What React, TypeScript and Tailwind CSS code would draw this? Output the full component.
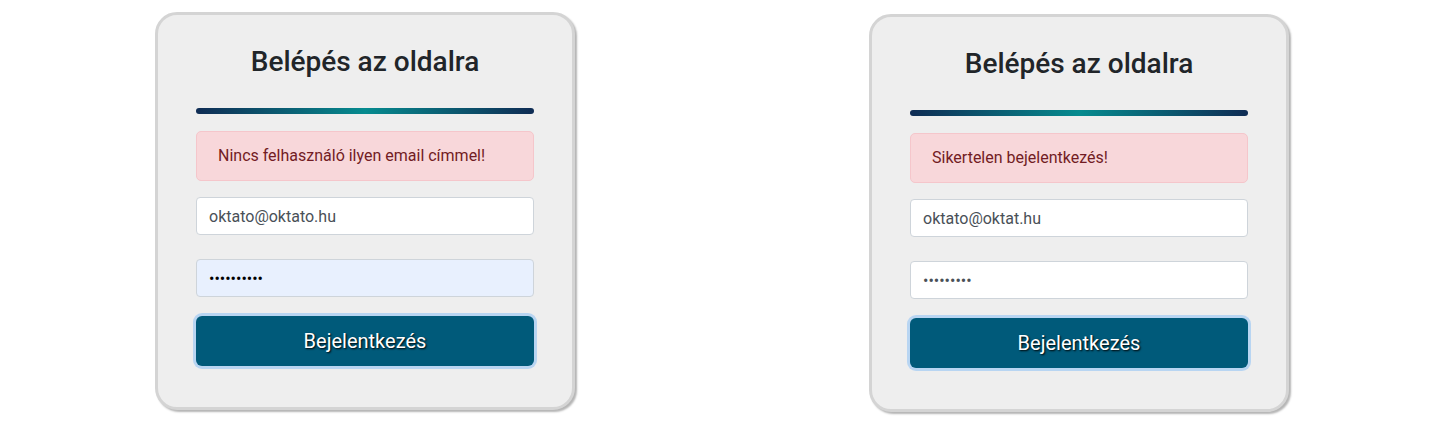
import React from "react";

type CardProps = {
  error: string;
  email: string;
  password: string;
  autofill?: boolean;
  className?: string;
};

function LoginCard({ error, email, password, autofill, className }: CardProps) {
  return (
    <div
      className={
        "w-[420px] rounded-[22px] border-[3px] border-[#d4d4d4] bg-[#eeeeee] px-[38px] pt-[30px] pb-[41px] shadow-[2px_2px_2px_#b5b5b5] " +
        (className ?? "")
      }
    >
      <h2 className="text-center text-[28px] leading-[34px] font-medium text-[#212529]">Belépés az oldalra</h2>
      <div className="mt-[29px] h-[6px] rounded-full bg-[linear-gradient(to_right,#0f2c54,#068b8f_50%,#0f2c54)]" />
      <div className="mt-[17px] flex h-[50px] items-center rounded-[5px] border border-[#f5c6cb] bg-[#f8d7da] px-[21px] text-[16px] text-[#721c24]">
        {error}
      </div>
      <input
        type="text"
        readOnly
        value={email}
        className="mt-[16px] block h-[38px] w-full rounded-[4px] border border-[#ced4da] bg-white px-[12px] text-[16px] text-[#495057] outline-none"
      />
      <input
        type="password"
        readOnly
        value={password}
        className={
          autofill
            ? "mt-[24px] block h-[38px] w-full rounded-[4px] border border-[#ced4da] bg-[#e8f0fe] px-[12px] text-[16px] text-black outline-none"
            : "mt-[24px] block h-[38px] w-full rounded-[4px] border border-[#ced4da] bg-white px-[12px] text-[16px] text-[#495057] outline-none"
        }
      />
      <button className="mt-[19px] block h-[50px] w-full rounded-[6px] bg-[#005a7a] text-[20px] text-white shadow-[0_0_0_3px_#b8d5f2] [text-shadow:1px_1px_2px_#000]">
        Bejelentkezés
      </button>
    </div>
  );
}

export default function App() {
  return (
    <div className="flex h-[445px] w-[1430px] items-start gap-[294px] bg-white pt-[12px] pl-[155px] font-['Roboto',sans-serif]">
      <LoginCard error="Nincs felhasználó ilyen email címmel!" email="oktato@oktato.hu" password="1234567890" autofill />
      <LoginCard error="Sikertelen bejelentkezés!" email="oktato@oktat.hu" password="123456789" className="mt-[2px]" />
    </div>
  );
}
